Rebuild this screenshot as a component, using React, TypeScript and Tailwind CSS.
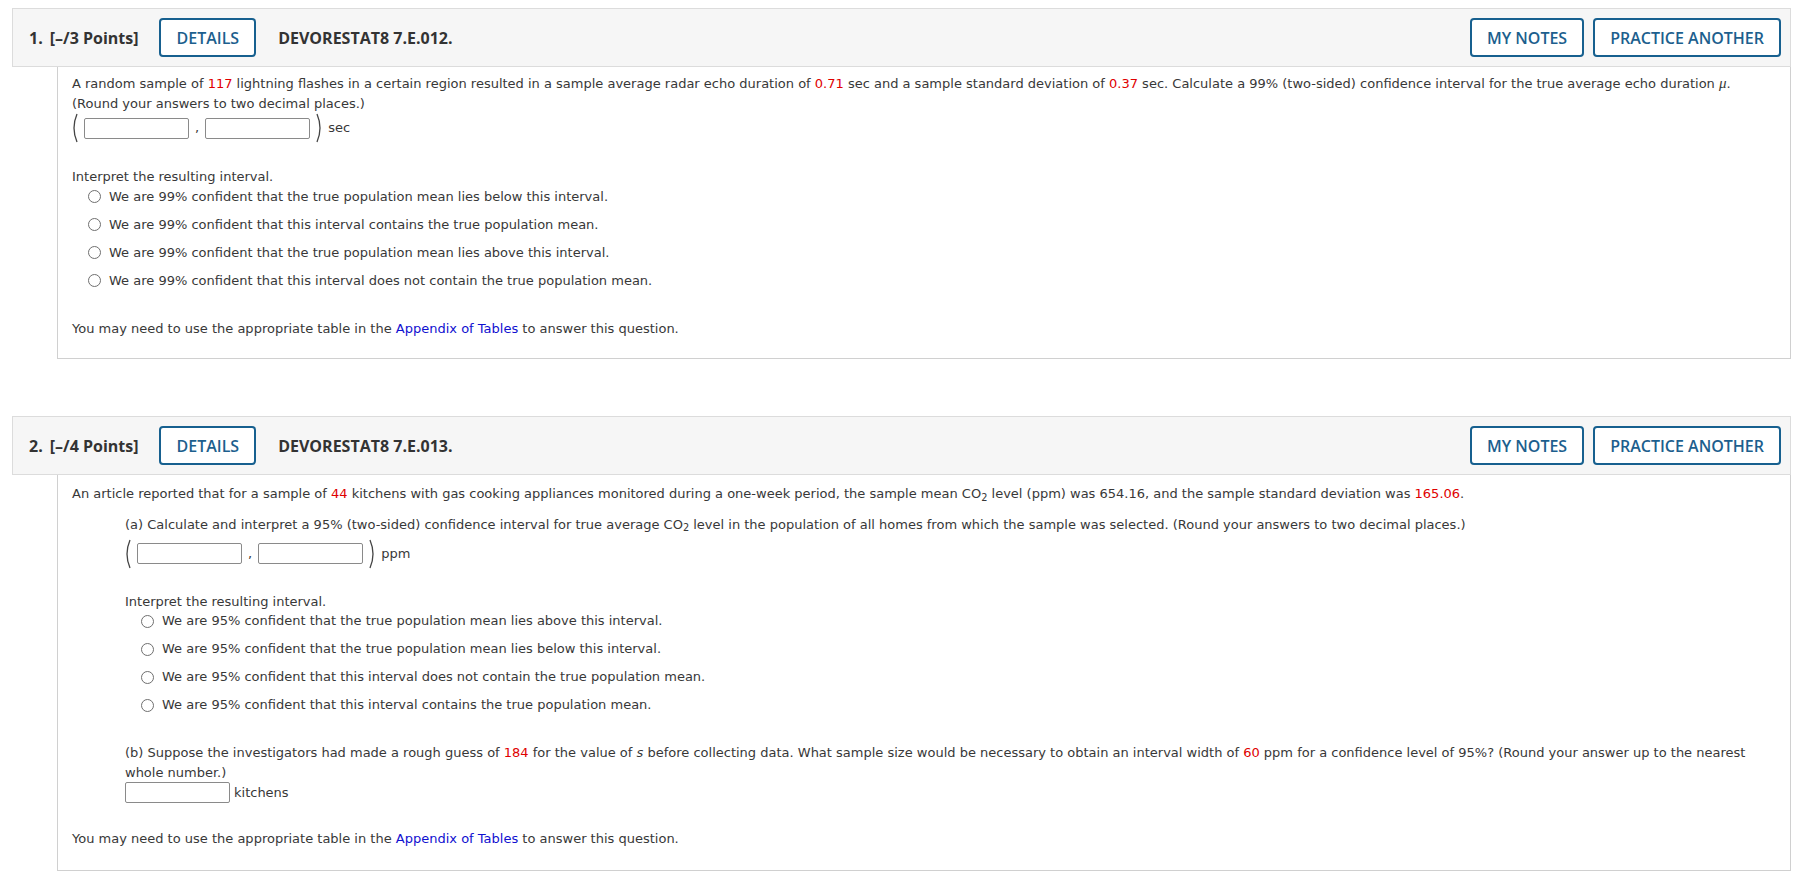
import React from 'react'

const body = { fontFamily: '"DejaVu Sans", Verdana, sans-serif' }
const head = { fontFamily: '"Open Sans", "Liberation Sans", sans-serif' }

function Red({ children }: { children: React.ReactNode }) {
  return <span className="text-[#e00000]">{children}</span>
}

function Link({ children }: { children: React.ReactNode }) {
  return <span className="text-[#1010d0]">{children}</span>
}

function HeadButton({ label }: { label: string }) {
  return (
    <button className="h-[39px] rounded-[4px] border-2 border-[#17608f] bg-white px-[15px] text-[16px] font-semibold text-[#1d5f8e]">
      {label}
    </button>
  )
}

function Header({ num, points, code }: { num: number; points: number; code: string }) {
  return (
    <div
      style={head}
      className="flex h-[59px] items-center border border-[#dcdcdc] bg-[#f6f6f6] pl-[16px] pr-[9px] text-[16px] text-[#333]"
    >
      <span className="font-bold">{num}.</span>
      <span className="ml-[7px] font-bold">[–/{points} Points]</span>
      <div className="ml-[21px]">
        <HeadButton label="DETAILS" />
      </div>
      <span className="ml-[22px] font-bold">{code}</span>
      <div className="ml-auto flex gap-[9px]">
        <HeadButton label="MY NOTES" />
        <HeadButton label="PRACTICE ANOTHER" />
      </div>
    </div>
  )
}

function Box() {
  return <span className="inline-block h-[21px] w-[105px] rounded-[2px] border border-[#8a8a8a] bg-white" />
}

// stretched delimiter, drawn thin like the MathJax one
function Paren({ right }: { right?: boolean }) {
  return (
    <svg width="8" height="30" viewBox="0 0 8 30" className="shrink-0">
      <path
        d={right ? 'M2 1 Q8 15 2 29' : 'M6 1 Q0 15 6 29'}
        fill="none"
        stroke="#444"
        strokeWidth="1.3"
      />
    </svg>
  )
}

function Interval({ unit }: { unit: string }) {
  return (
    <div className="-ml-[1px] flex h-[30px] items-center">
      <Paren />
      <span className="ml-[5px] flex">
        <Box />
      </span>
      <span className="mx-[6px]">,</span>
      <Box />
      <span className="ml-[5px] flex">
        <Paren right />
      </span>
      <span className="ml-[5px]">{unit}</span>
    </div>
  )
}

function Options({ items }: { items: string[] }) {
  return (
    <div className="ml-[16px] flex flex-col gap-[8px]">
      {items.map((t) => (
        <label key={t} className="flex h-[20px] items-center">
          <span className="h-[13px] w-[13px] rounded-full border border-[#6f6f6f] bg-white" />
          <span className="ml-[8px]">{t}</span>
        </label>
      ))}
    </div>
  )
}

function Appendix() {
  return (
    <p>
      You may need to use the appropriate table in the <Link>Appendix of Tables</Link> to answer this question.
    </p>
  )
}

export default function App() {
  return (
    <div className="min-h-screen bg-white pl-[12px] pr-[15px] pt-[8px]">
      <section>
        <Header num={1} points={3} code="DEVORESTAT8 7.E.012." />
        <div
          style={body}
          className="ml-[45px] border-x border-b border-[#d0d0d0] pb-[20px] pl-[14px] pt-[7px] text-[13px] leading-[19.6px] text-[#383838]"
        >
          <p className="whitespace-nowrap">
            A random sample of <Red>117</Red> lightning flashes in a certain region resulted in a sample average radar
            echo duration of <Red>0.71</Red> sec and a sample standard deviation of <Red>0.37</Red> sec. Calculate a 99%
            (two-sided) confidence interval for the true average echo duration{' '}
            <i style={{ fontFamily: '"Liberation Serif", serif' }} className="text-[15px]">
              μ
            </i>
            .
            <br />
            (Round your answers to two decimal places.)
          </p>
          <Interval unit="sec" />
          <p className="mt-[24px]">Interpret the resulting interval.</p>
          <Options
            items={[
              'We are 99% confident that the true population mean lies below this interval.',
              'We are 99% confident that this interval contains the true population mean.',
              'We are 99% confident that the true population mean lies above this interval.',
              'We are 99% confident that this interval does not contain the true population mean.',
            ]}
          />
          <div className="mt-[28px]">
            <Appendix />
          </div>
        </div>
      </section>

      <section className="mt-[57px]">
        <Header num={2} points={4} code="DEVORESTAT8 7.E.013." />
        <div
          style={body}
          className="ml-[45px] border-x border-b border-[#d0d0d0] pb-[21px] pl-[14px] pt-[9px] text-[13px] leading-[19.6px] text-[#383838]"
        >
          <p className="whitespace-nowrap">
            An article reported that for a sample of <Red>44</Red> kitchens with gas cooking appliances monitored during
            a one-week period, the sample mean CO<sub>2</sub> level (ppm) was 654.16, and the sample standard deviation
            was <Red>165.06</Red>.
          </p>
          <div className="ml-[53px]">
            <p className="mt-[11px] whitespace-nowrap">
              (a) Calculate and interpret a 95% (two-sided) confidence interval for true average CO<sub>2</sub> level in
              the population of all homes from which the sample was selected. (Round your answers to two decimal
              places.)
            </p>
            <div className="mt-[4px]">
              <Interval unit="ppm" />
            </div>
            <p className="mt-[23px]">Interpret the resulting interval.</p>
            <Options
              items={[
                'We are 95% confident that the true population mean lies above this interval.',
                'We are 95% confident that the true population mean lies below this interval.',
                'We are 95% confident that this interval does not contain the true population mean.',
                'We are 95% confident that this interval contains the true population mean.',
              ]}
            />
            <p className="mt-[28px] whitespace-nowrap">
              (b) Suppose the investigators had made a rough guess of <Red>184</Red> for the value of <i>s</i> before
              collecting data. What sample size would be necessary to obtain an interval width of <Red>60</Red> ppm for a
              confidence level of 95%? (Round your answer up to the nearest
              <br />
              whole number.)
            </p>
            <div className="flex h-[21px] items-center">
              <Box />
              <span className="ml-[4px]">kitchens</span>
            </div>
          </div>
          <div className="mt-[26px]">
            <Appendix />
          </div>
        </div>
      </section>
    </div>
  )
}
